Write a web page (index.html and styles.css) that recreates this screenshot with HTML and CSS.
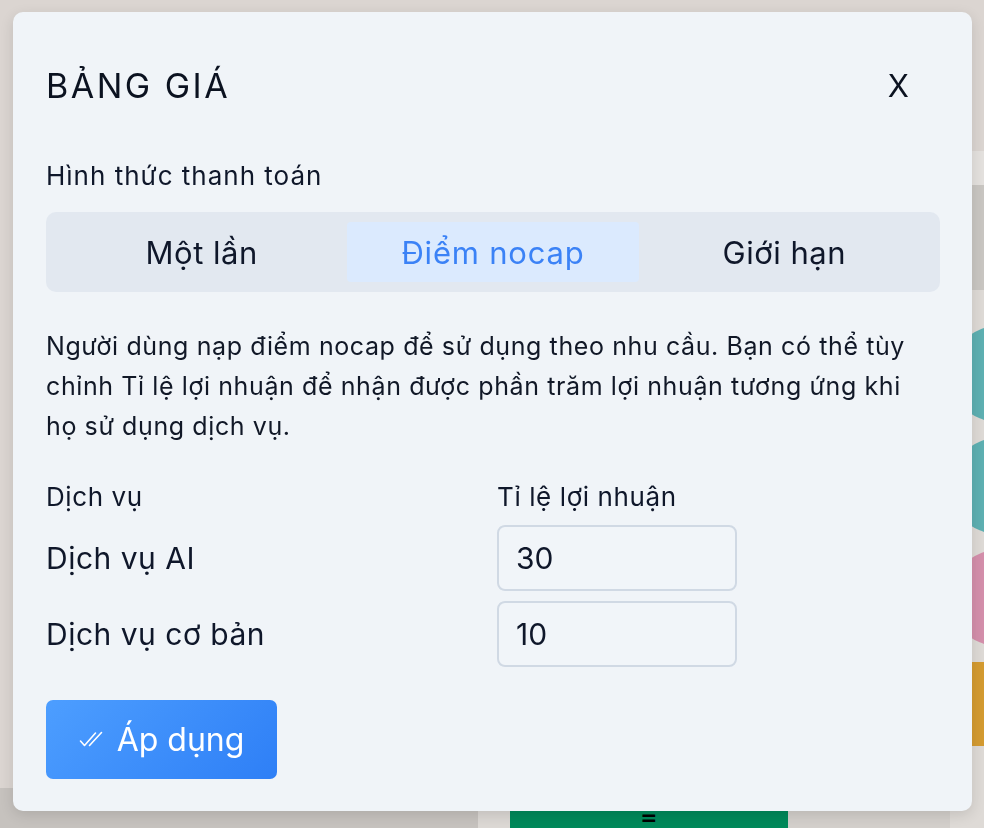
FILE: index.html
```html
<!DOCTYPE html>
<html lang="vi">
    <head>
        <meta charset="UTF-8">
        <title>Bảng giá</title>
        <link rel="stylesheet" href="styles.css">
    </head>
    <body>
        <div class="page">
            <div class="page-main">
                <div class="page-fill"></div>
                <div class="page-foot">
                    <div class="foot-left"></div>
                    <div class="foot-gap"></div>
                    <div class="foot-btn"><span>=</span></div>
                    <div class="foot-right"></div>
                </div>
            </div>
            <div class="page-side">
                <div class="side-top"></div>
                <div class="side-light"></div>
                <div class="side-gray"></div>
                <div class="side-list">
                    <span class="dot teal"></span>
                    <span class="dot teal"></span>
                    <span class="dot pink"></span>
                    <span class="block orange"></span>
                </div>
            </div>
        </div>

        <div class="overlay">
            <div class="modal">
                <div class="modal-head">
                    <h2 class="modal-title">BẢNG GIÁ</h2>
                    <span class="modal-close">X</span>
                </div>

                <div class="field-label">Hình thức thanh toán</div>
                <div class="tabs">
                    <div class="tab">Một lần</div>
                    <div class="tab on">Điểm nocap</div>
                    <div class="tab">Giới hạn</div>
                </div>

                <p class="desc">Người dùng nạp điểm nocap để sử dụng theo nhu cầu. Bạn có thể tùy chỉnh Tỉ lệ lợi nhuận để nhận được phần trăm lợi nhuận tương ứng khi họ sử dụng dịch vụ.</p>

                <div class="rates">
                    <div class="rates-th">Dịch vụ</div>
                    <div class="rates-th">Tỉ lệ lợi nhuận</div>

                    <div class="rates-name">Dịch vụ AI</div>
                    <input class="rates-input" type="text" value="30">

                    <div class="rates-name">Dịch vụ cơ bản</div>
                    <input class="rates-input" type="text" value="10">
                </div>

                <button class="apply">
                    <svg width="28" height="17" viewBox="0 0 28 17" fill="none" stroke="#fff" stroke-width="1.6" stroke-linecap="round" stroke-linejoin="round">
                        <path d="M1.5 10l4 4.5 11-12.5"/>
                        <path d="M10.5 14.5l12-13"/>
                    </svg>
                    <span>Áp dụng</span>
                </button>
            </div>
        </div>
    </body>
</html>
```

FILE: styles.css
```css
*{ margin:0; padding:0; box-sizing:border-box; }
html,body{
    width: 100%;
    height: 100%;
    overflow: hidden;
}
body{
    font-family: Inter, "Noto Sans", sans-serif;
    color: #0f172a;
    background: #dbd5d1;
}

/* page behind the dialog */
.page{
    display: flex;
    height: 828px;
}
.page-main{
    flex: 1;
    display: flex;
    flex-direction: column;
}
.page-fill{
    flex: 1;
}
.page-foot{
    height: 40px;
    display: flex;
}
.foot-left{
    width: 478px;
    background: #c6c2be;
}
.foot-gap{
    width: 32px;
    background: #dcd8d4;
}
.foot-btn{
    width: 278px;
    background: #00895a;
    border-radius: 12px 12px 0 0;
    display: flex;
    justify-content: center;
    align-items: flex-end;
    padding-bottom: 1px;
}
.foot-btn span{
    color: #000;
    font-weight: bold;
    font-size: 20px;
    line-height: 20px;
    display: block;
    transform: scaleX(1.3);
}
.foot-right{
    flex: 1;
    background: #d3cfcb;
}
.page-side{
    width: 34px;
    display: flex;
    flex-direction: column;
    overflow: hidden;
}
.side-top{
    height: 151px;
}
.side-light{
    height: 34px;
    background: #e4e1de;
}
.side-gray{
    height: 105px;
    background: #c9c6c2;
}
.side-list{
    flex: 1;
    background: #dedad6;
    display: flex;
    flex-direction: column;
    gap: 16px;
    padding-top: 36px;
}
.dot{
    display: block;
    width: 96px;
    height: 96px;
    flex: none;
    border-radius: 50%;
}
.dot.teal{ background: #5eb0b2; }
.dot.pink{ background: #d48fab; }
.block{
    display: block;
    width: 96px;
    height: 84px;
    flex: none;
}
.block.orange{ background: #d49b31; }

/* dialog */
.overlay{
    position: fixed;
    top: 0;
    left: 0;
    right: 0;
    bottom: 0;
}
.modal{
    width: 959px;
    height: 799px;
    margin: 12px 0 0 13px;
    padding: 42px 32px 32px 33px;
    background: #f0f4f8;
    border-radius: 10px;
    box-shadow: 0 4px 14px rgba(0,0,0,.12);
    display: flex;
    flex-direction: column;
    align-items: flex-start;
}
.modal-head{
    width: 100%;
    height: 64px;
    display: flex;
    align-items: center;
    justify-content: space-between;
    padding-right: 31px;
}
.modal-title{
    font-size: 34px;
    font-weight: 400;
    letter-spacing: 2.5px;
    line-height: 64px;
    color: #0b1220;
}
.modal-close{
    font-size: 31px;
    line-height: 64px;
    color: #0b1220;
    cursor: pointer;
}
.field-label{
    margin-top: 40px;
    font-size: 26px;
    letter-spacing: 1px;
    line-height: 36px;
}
.tabs{
    margin-top: 18px;
    width: 100%;
    height: 80px;
    padding: 10px;
    background: #e2e8f0;
    border-radius: 10px;
    display: grid;
    grid-template-columns: 1fr 1fr 1fr;
}
.tab{
    display: flex;
    align-items: center;
    justify-content: center;
    font-size: 31px;
    letter-spacing: 0.5px;
    color: #0f172a;
    border-radius: 4px;
    cursor: pointer;
}
.tab.on{
    background: #dbeafe;
    color: #3b82f6;
    letter-spacing: 0.8px;
}
.desc{
    margin-top: 34px;
    max-width: 880px;
    font-size: 25px;
    letter-spacing: 0.6px;
    line-height: 40px;
    color: #111827;
}
.rates{
    margin-top: 33px;
    display: grid;
    grid-template-columns: 451px 240px;
    grid-auto-rows: 66px;
    grid-template-rows: 36px;
    row-gap: 10px;
    align-items: center;
}
.rates-th{
    font-size: 26px;
    letter-spacing: 0.6px;
    line-height: 36px;
}
.rates-name{
    font-size: 30px;
    letter-spacing: 0.5px;
}
.rates-input{
    width: 240px;
    height: 66px;
    padding: 0 17px;
    font-family: inherit;
    font-size: 30px;
    color: #0f172a;
    background: #f1f5f9;
    border: 2px solid #d0d9e4;
    border-radius: 8px;
    outline: none;
}
.apply{
    margin-top: 33px;
    width: 231px;
    height: 79px;
    border: none;
    border-radius: 7px;
    background: linear-gradient(135deg, #4d9eff, #2e7ff6);
    color: #fff;
    font-family: inherit;
    font-size: 32px;
    display: flex;
    align-items: center;
    justify-content: center;
    gap: 10px;
    cursor: pointer;
}
```
